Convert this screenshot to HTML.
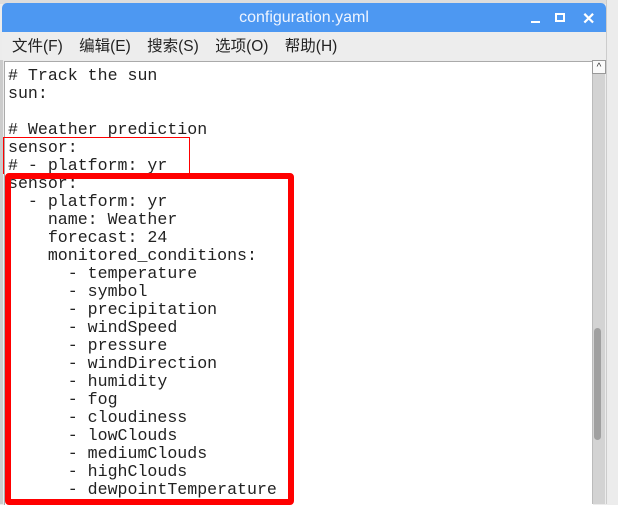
<!DOCTYPE html>
<html><head><meta charset="utf-8"><style>
body{margin:0;width:618px;height:504px;overflow:hidden;background:#ececec;position:relative;font-family:"Liberation Sans","Noto Sans CJK SC",sans-serif}
.abs{position:absolute}
#title{left:2px;top:3px;width:604px;height:29px;background:#4d98f2;border-radius:5px 5px 0 0;color:#eef4ff;font-size:16px;text-align:center;line-height:29px}
#menu{left:2px;top:32px;width:604px;height:28px;background:#ededed;font-size:15.5px;color:#222;line-height:29px}
#menu span{margin-left:10px;margin-right:2px}
#edit{left:4px;top:61px;width:588px;height:443px;background:#fff;border-top:1px solid #aaa;border-left:1px solid #aaa}
pre{margin:0;position:absolute;left:3px;top:5px;font-family:"Liberation Mono",monospace;font-size:16.6px;line-height:18px;color:#222}
#sb{left:592px;top:61px;width:12px;height:443px;background:#d3d3d3;border-left:1px solid #bbb}
#thumb{left:594px;top:328px;width:7px;height:112px;background:#a0a0a0;border-radius:4px}
#up{left:592px;top:60px;width:12px;height:12px;background:#fafafa;border:1px solid #999;font-size:10px;text-align:center;line-height:14px;color:#333}
#rs{left:606px;top:0;width:12px;height:504px;background:#ececec;border-left:1px solid #ccc}
</style></head><body>
<div class="abs" style="left:0;top:0;width:618px;height:4px;background:#ddd"></div>
<div class="abs" id="title">configuration.yaml</div>
<div class="abs" style="left:555px;top:13px;width:10px;height:9px;border:2px solid #fff;box-sizing:border-box"></div>
<div class="abs" style="left:531px;top:21px;width:9px;height:2px;background:#fff"></div>
<div class="abs" style="left:582px;top:9px;color:#fff;font-size:16px;font-weight:bold">✕</div>
<div class="abs" id="menu"><span>文件(F)</span> <span>编辑(E)</span> <span>搜索(S)</span> <span>选项(O)</span> <span>帮助(H)</span></div>
<div class="abs" id="edit"><pre># Track the sun
sun:

# Weather prediction
sensor:
# - platform: yr
sensor:
  - platform: yr
    name: Weather
    forecast: 24
    monitored_conditions:
      - temperature
      - symbol
      - precipitation
      - windSpeed
      - pressure
      - windDirection
      - humidity
      - fog
      - cloudiness
      - lowClouds
      - mediumClouds
      - highClouds
      - dewpointTemperature</pre></div>
<div class="abs" id="sb"></div>
<div class="abs" id="thumb"></div>
<div class="abs" id="up">^</div>
<div class="abs" id="rs"></div>
<div class="abs" style="left:0;top:60px;width:3px;height:444px;background:#ccc"></div>
<div class="abs" style="left:3px;top:137px;width:185px;height:36px;border:1px solid #ff0000;border-bottom:none"></div>
<div class="abs" style="left:5px;top:173px;width:277px;height:320px;border:6px solid #f00;border-radius:4px"></div>
</body></html>
